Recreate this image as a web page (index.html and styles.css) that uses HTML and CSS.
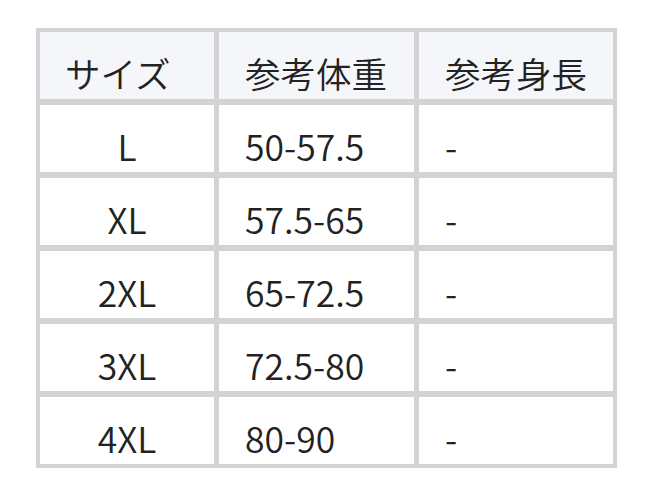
FILE: index.html
```html
<!DOCTYPE html>
<html lang="ja">
<head>
<meta charset="utf-8">
<link rel="stylesheet" href="styles.css">
</head>
<body>
<div class="size-table">
  <div class="cell head">サイズ</div>
  <div class="cell head">参考体重</div>
  <div class="cell head">参考身長</div>

  <div class="cell center">L</div>
  <div class="cell">50-57.5</div>
  <div class="cell">-</div>

  <div class="cell center">XL</div>
  <div class="cell">57.5-65</div>
  <div class="cell">-</div>

  <div class="cell center">2XL</div>
  <div class="cell">65-72.5</div>
  <div class="cell">-</div>

  <div class="cell center">3XL</div>
  <div class="cell">72.5-80</div>
  <div class="cell">-</div>

  <div class="cell center">4XL</div>
  <div class="cell">80-90</div>
  <div class="cell">-</div>
</div>
</body>
</html>
```
FILE: styles.css
```css
html, body {
  margin: 0;
  background: #ffffff;
}

body {
  padding: 28px 0 0 36px;
  font-family: "Noto Sans CJK JP", "Noto Sans", sans-serif;
  font-weight: 350;
  color: #222222;
}

.size-table {
  display: grid;
  grid-template-columns: 174px 195px 194px;
  grid-auto-rows: 67px;
  gap: 6px 5px;
  padding: 4px;
  width: max-content;
  background: #d3d3d3;
}

.cell {
  background: #ffffff;
  font-size: 35.5px;
  line-height: 52px;
  padding: 15px 0 0 26px;
  box-sizing: border-box;
  white-space: nowrap;
}

.head {
  background: #f5f6fa;
  padding-left: 26px;
}

.head:first-child {
  padding-left: 25px;
}

.center {
  text-align: center;
  padding-left: 0;
}
```
